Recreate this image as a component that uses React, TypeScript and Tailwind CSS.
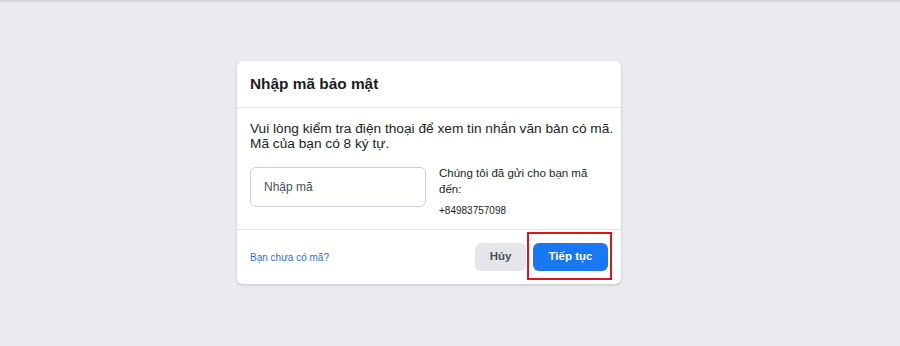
export default function App() {
  return (
    <div
      className="relative flex h-[346px] w-[900px] flex-col items-center bg-[#e9ebee] pt-[61px]"
      style={{ fontFamily: '"Liberation Sans", Arial, sans-serif' }}
    >
      <div className="absolute inset-x-0 top-0 h-[2px] bg-[#d6d8dc]" />
      <div className="ml-[-42px] w-[384px] rounded-md bg-white shadow-[0_1px_3px_rgba(0,0,0,0.18)]">
        <div className="flex h-[47px] items-center border-b border-[#e1e3e6] px-[13px]">
          <h2 className="text-[15.4px] font-bold text-[#1c1e21]">Nhập mã bảo mật</h2>
        </div>
        <div className="border-b border-[#e1e3e6] px-[13px] pt-[13px] pb-[11px]">
          <p className="whitespace-nowrap text-[13.7px] leading-[15px] text-[#1c1e21]">
            Vui lòng kiểm tra điện thoại để xem tin nhắn văn bản có mã.
            <br />
            Mã của bạn có 8 ký tự.
          </p>
          <div className="mt-[16px] flex gap-[13px]">
            <div className="flex h-[40px] w-[176px] items-center rounded-md border border-[#ccd0d5] px-[13px] text-[12px] text-[#4b4f56]">
              Nhập mã
            </div>
            <div className="mt-[-2px] text-[11.5px] text-[#1c1e21]">
              <p className="leading-[16px]">
                Chúng tôi đã gửi cho bạn mã
                <br />
                đến:
              </p>
              <p className="mt-[7px] text-[10px] leading-[14px]">+84983757098</p>
            </div>
          </div>
        </div>
        <div className="flex h-[54px] items-center justify-between px-[13px]">
          <a className="text-[10px] text-[#2e6fe0]">Bạn chưa có mã?</a>
          <div className="flex items-center gap-[7px]">
            <button className="h-[28px] w-[51px] rounded-md bg-[#e4e6eb] text-[11.5px] font-bold text-[#4b4f56]">
              Hủy
            </button>
            <div className="relative">
              <button className="h-[28px] w-[75px] rounded-md bg-[#1877f2] text-[11.5px] font-bold text-white">
                Tiếp tục
              </button>
              <div className="absolute left-[-6px] top-[-11px] h-[48px] w-[85px] border-2 border-[#e0141e]" />
            </div>
          </div>
        </div>
      </div>
    </div>
  );
}
